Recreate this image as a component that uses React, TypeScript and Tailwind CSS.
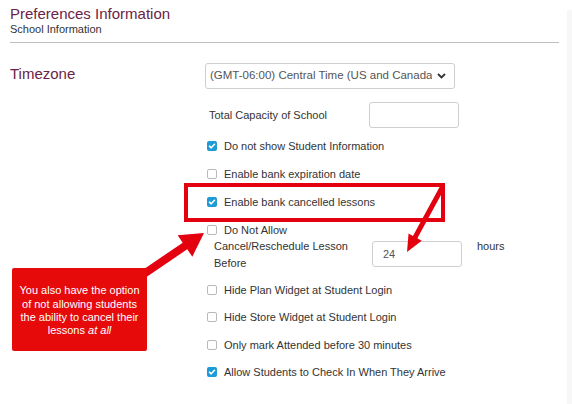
import React from "react";

const OPTIONS_TOP = [
  { label: "Do not show Student Information", checked: true },
  { label: "Enable bank expiration date", checked: false },
  { label: "Enable bank cancelled lessons", checked: true },
  { label: "Do Not Allow", checked: false },
];

const OPTIONS_BOTTOM = [
  { label: "Hide Plan Widget at Student Login", checked: false },
  { label: "Hide Store Widget at Student Login", checked: false },
  { label: "Only mark Attended before 30 minutes", checked: false },
  { label: "Allow Students to Check In When They Arrive", checked: true },
];

function Checkbox({ checked }: { checked: boolean }) {
  if (checked) {
    return (
      <span className="flex h-[10px] w-[10px] items-center justify-center rounded-[2px] bg-[#1e9ad6]">
        <svg width="8" height="8" viewBox="0 0 8 8">
          <path d="M1.5 4.2 L3.2 5.8 L6.5 2.3" fill="none" stroke="#fff" strokeWidth="1.6" strokeLinecap="round" strokeLinejoin="round" />
        </svg>
      </span>
    );
  }
  return <span className="h-[10px] w-[10px] rounded-[2px] border border-[#b9b9b9] bg-white" />;
}

function Option({ label, checked, tall }: { label: string; checked: boolean; tall?: boolean }) {
  return (
    <div className={tall ? "flex h-[28px] items-center gap-[7px] pl-[2px]" : "flex h-[27.5px] items-center gap-[7px] pl-[2px]"}>
      <Checkbox checked={checked} />
      <span className="text-[11px] text-[#333]">{label}</span>
    </div>
  );
}

// polygon for a straight arrow with a triangular head
function arrowPoints(x1: number, y1: number, x2: number, y2: number, w: number, hw: number, hl: number) {
  const len = Math.hypot(x2 - x1, y2 - y1);
  const dx = (x2 - x1) / len;
  const dy = (y2 - y1) / len;
  const nx = -dy;
  const ny = dx;
  const bx = x2 - dx * hl;
  const by = y2 - dy * hl;
  const pts = [
    [x1 + (nx * w) / 2, y1 + (ny * w) / 2],
    [bx + (nx * w) / 2, by + (ny * w) / 2],
    [bx + (nx * hw) / 2, by + (ny * hw) / 2],
    [x2, y2],
    [bx - (nx * hw) / 2, by - (ny * hw) / 2],
    [bx - (nx * w) / 2, by - (ny * w) / 2],
    [x1 - (nx * w) / 2, y1 - (ny * w) / 2],
  ];
  return pts.map((p) => p.join(",")).join(" ");
}

export default function App() {
  return (
    <div className="relative flex h-[404px] w-[572px] overflow-hidden bg-white font-['Liberation_Sans',Arial,sans-serif]">
      <div className="w-[567px]">
        <div className="mx-[10px] w-[549px] border-b border-[#bdbdbd] pt-[5px] pb-[6px]">
          <h1 className="text-[15px] leading-[18px] text-[#6b2346]">Preferences Information</h1>
          <p className="text-[11px] leading-[13px] text-[#333]">School Information</p>
        </div>

        <div className="mt-[20px] flex">
          <div className="w-[205px] pl-[10px] pt-[2px] text-[15px] leading-[18px] text-[#6b2346]">Timezone</div>

          <div className="w-[330px]">
            <div className="flex h-[26px] w-[250px] items-center justify-between rounded-[3px] border border-[#cfcfcf] pl-[4px] pr-[8px]">
              <span className="overflow-hidden whitespace-nowrap text-[11.5px] text-[#555]">
                (GMT-06:00) Central Time (US and Canada
              </span>
              <svg width="9" height="6" viewBox="0 0 9 6" className="shrink-0">
                <path d="M1 1 L4.5 4.5 L8 1" fill="none" stroke="#333" strokeWidth="1.8" />
              </svg>
            </div>

            <div className="mt-[13px] flex h-[26px] items-center">
              <span className="w-[164px] pl-[4px] text-[11px] text-[#333]">Total Capacity of School</span>
              <span className="h-[26px] w-[90px] rounded-[3px] border border-[#cfcfcf]" />
            </div>

            <div className="mt-[4px]">
              {OPTIONS_TOP.map((o) => (
                <Option key={o.label} label={o.label} checked={o.checked} tall />
              ))}
            </div>

            <div className="mt-[-6px] flex h-[38px] items-start">
              <div className="w-[167px] pl-[9px] text-[11px] leading-[17px] text-[#333]">
                Cancel/Reschedule Lesson Before
              </div>
              <div className="mt-[3px] flex h-[26px] w-[90px] items-center rounded-[3px] border border-[#cfcfcf] pl-[10px] text-[11px] text-[#555]">
                24
              </div>
              <span className="pl-[15px] text-[11px] leading-[17px] text-[#333]">hours</span>
            </div>

            <div>
              {OPTIONS_BOTTOM.map((o) => (
                <Option key={o.label} label={o.label} checked={o.checked} />
              ))}
            </div>
          </div>
        </div>
      </div>
      <div className="mt-[10px] w-[5px] bg-[#f7f7f7]" />

      {/* annotations */}
      <div className="absolute left-[184px] top-[183px] h-[39px] w-[261px] border-[4px] border-[#e3000f]" />
      <svg className="pointer-events-none absolute left-0 top-0" width="572" height="404">
        <polygon points={arrowPoints(443, 186, 407, 252, 5, 15, 17)} fill="#e3000f" />
        <polygon points={arrowPoints(135, 280, 204, 233, 8, 26, 23)} fill="#e3000f" />
      </svg>
      <div className="absolute left-[12px] top-[268px] flex h-[83px] w-[135px] items-center justify-center rounded-[2px] bg-[#e60a0a] px-[4px] pt-[3px] text-center text-[11px] leading-[13.3px] text-white">
        <p>
          You also have the option of not allowing students the ability to cancel their lessons{" "}
          <i>at all</i>
        </p>
      </div>
    </div>
  );
}
